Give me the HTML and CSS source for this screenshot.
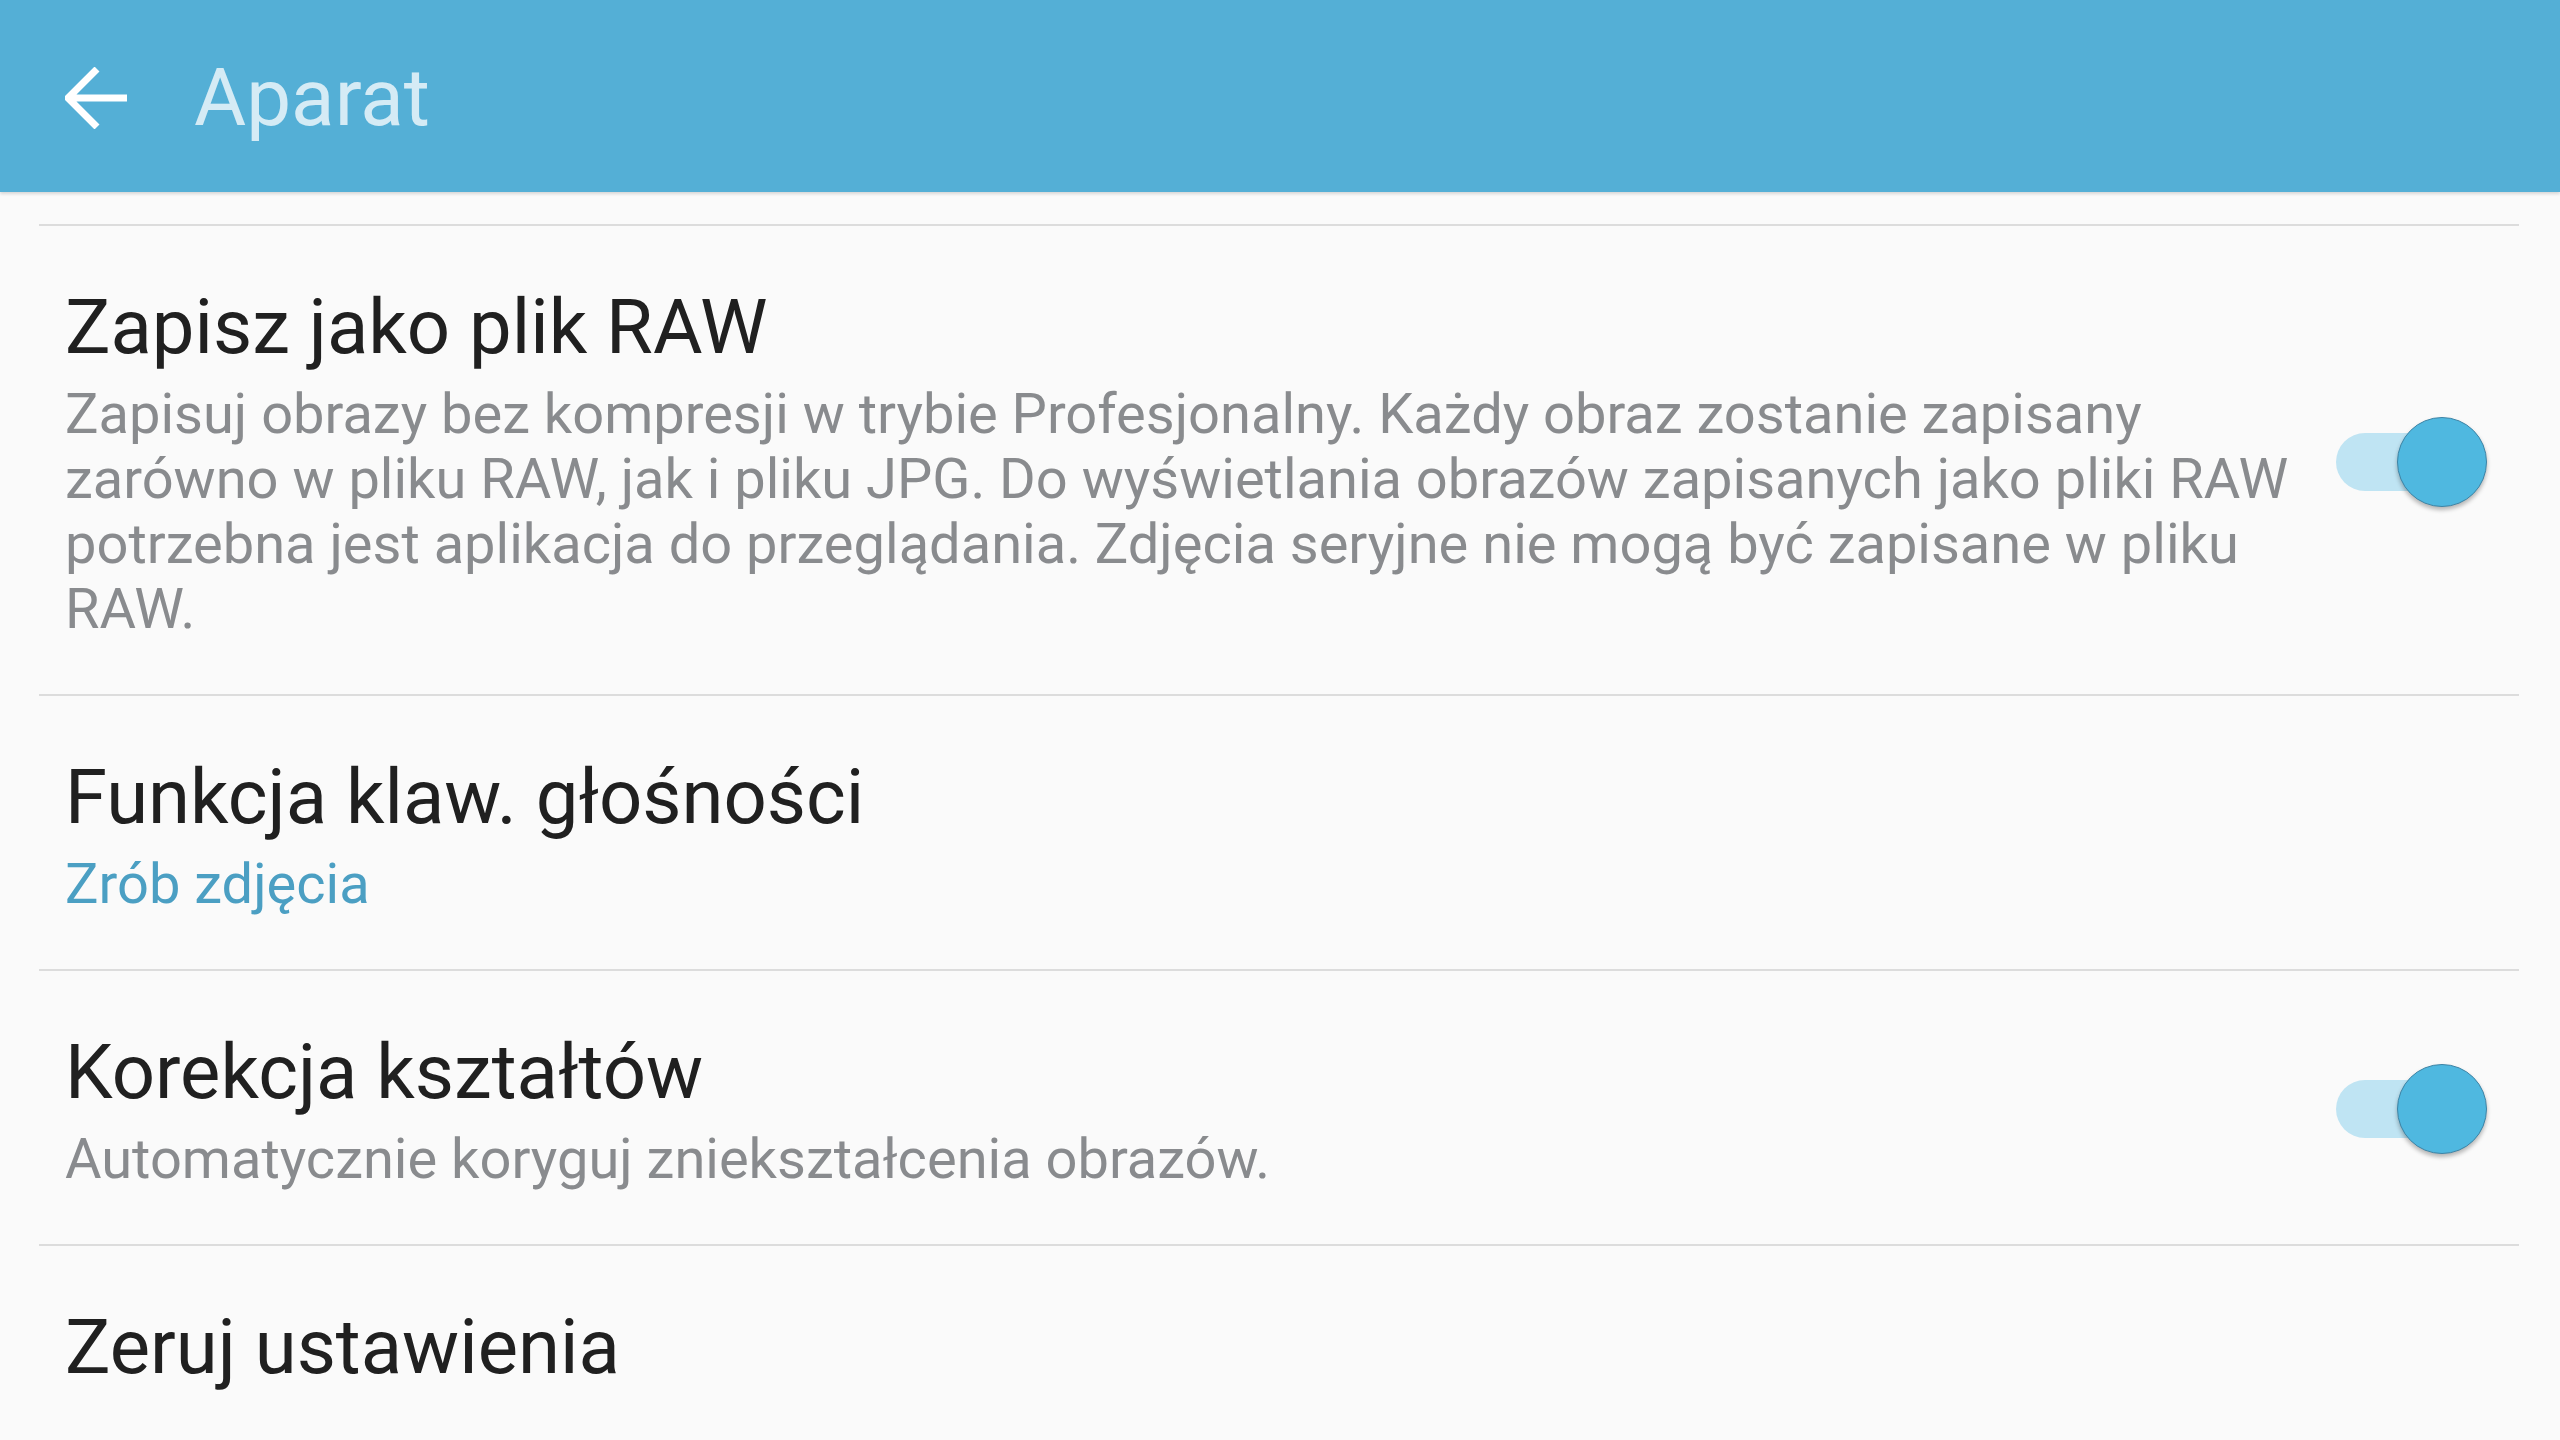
FILE: index.html
```html
<!DOCTYPE html>
<html lang="pl">
<head>
<meta charset="utf-8">
<title>Aparat</title>
<link rel="stylesheet" href="styles.css">
</head>
<body>
<header class="appbar">
  <svg class="back" viewBox="0 0 62 62" width="62" height="62" aria-hidden="true">
    <path d="M2 31 H62 M32 2 L3 31 L32 60" fill="none" stroke="#ffffff" stroke-width="7" stroke-linejoin="miter"/>
  </svg>
  <h1 class="appbar-title">Aparat</h1>
</header>
<main class="list">
  <div class="item">
    <div class="texts">
      <div class="title">Zapisz jako plik RAW</div>
      <div class="summary">Zapisuj obrazy bez kompresji w trybie Profesjonalny. Każdy obraz zostanie zapisany<br>zarówno w pliku RAW, jak i pliku JPG. Do wyświetlania obrazów zapisanych jako pliki RAW<br>potrzebna jest aplikacja do przeglądania. Zdjęcia seryjne nie mogą być zapisane w pliku<br>RAW.</div>
    </div>
    <div class="switch"><span class="track"></span><span class="thumb"></span></div>
  </div>
  <div class="item">
    <div class="texts">
      <div class="title">Funkcja klaw. głośności</div>
      <div class="summary accent">Zrób zdjęcia</div>
    </div>
  </div>
  <div class="item">
    <div class="texts">
      <div class="title">Korekcja kształtów</div>
      <div class="summary">Automatycznie koryguj zniekształcenia obrazów.</div>
    </div>
    <div class="switch"><span class="track"></span><span class="thumb"></span></div>
  </div>
  <div class="item">
    <div class="texts">
      <div class="title">Zeruj ustawienia</div>
    </div>
  </div>
</main>
</body>
</html>
```

FILE: styles.css
```css
html, body {
  margin: 0;
  padding: 0;
}
body {
  width: 2560px;
  height: 1440px;
  overflow: hidden;
  background: #fafafa;
  font-family: Roboto, "Noto Sans", "Liberation Sans", sans-serif;
}
.appbar {
  position: relative;
  z-index: 2;
  height: 192px;
  background: #54afd6;
  display: flex;
  align-items: center;
  padding-left: 65px;
  box-shadow: 0 2px 3px rgba(0, 0, 0, 0.14);
}
.back {
  display: block;
  margin-top: 4px;
}
.appbar-title {
  margin: 0 0 0 67px;
  font-size: 80px;
  font-weight: 400;
  color: #d5ebf5;
  line-height: 1;
  margin-top: 4px;
}
.list {
  padding: 32px 41px 0 39px;
}
.item {
  display: flex;
  align-items: center;
  border-top: 2px solid #dcdcdc;
  padding: 55px 32px 52px 26px;
}
.texts {
  flex: 1;
  min-width: 0;
  display: flex;
  flex-direction: column;
  gap: 9px;
}
.title {
  font-size: 76px;
  line-height: 92px;
  color: #202020;
  white-space: nowrap;
}
.summary {
  font-size: 56px;
  line-height: 65px;
  color: #898b8e;
  white-space: nowrap;
}
.summary.accent {
  color: #4b9fc3;
}
.switch {
  position: relative;
  width: 151px;
  height: 90px;
  flex: none;
  margin-left: 40px;
}
.track {
  position: absolute;
  left: 0;
  top: 16px;
  width: 140px;
  height: 58px;
  border-radius: 29px;
  background: #bfe4f3;
}
.thumb {
  position: absolute;
  right: 0;
  top: 0;
  width: 88px;
  height: 88px;
  border-radius: 50%;
  background: #4fb8e0;
  border: 1.5px solid #3d84a6;
  box-shadow: 0 3px 4px rgba(0, 0, 0, 0.28);
}
```
